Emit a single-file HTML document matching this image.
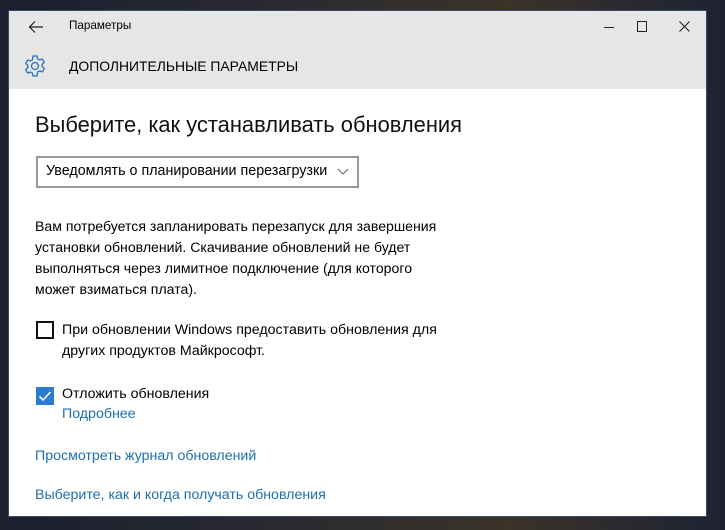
<!DOCTYPE html>
<html><head><meta charset="utf-8"><style>
body{margin:0;width:725px;height:530px;overflow:hidden;background:linear-gradient(90deg,#1b1f2e,#2a2a30 40%,#3a3328 70%,#1d2233);font-family:"Liberation Sans","DejaVu Sans",sans-serif;position:relative}
.win{position:absolute;left:8px;top:10px;width:699px;height:507px;background:#fff;border:1px solid #3b4a66;box-sizing:border-box}
.hdr{position:absolute;left:0;top:0;width:100%;height:78px;background:#e6e6e6}
.t{position:absolute;white-space:nowrap;color:#000}
.lk{color:#1f6fae}
</style></head><body>
<div class="win">
<div class="hdr">
<svg style="position:absolute;left:19px;top:9px" width="16" height="14" viewBox="0 0 16 14"><path d="M15 7H2M7 1.5L1.5 7 7 12.5" stroke="#222" stroke-width="1.2" fill="none"/></svg>
<div class="t" style="left:60px;top:8px;font-size:11.7px">Параметры</div>
<div style="position:absolute;left:595px;top:16px;width:10px;height:1px;background:#222"></div>
<div style="position:absolute;left:628px;top:10px;width:8px;height:9px;border:1px solid #222"></div>
<svg style="position:absolute;left:670px;top:10px" width="11" height="11"><path d="M0.5 0.5L10.5 10.5M10.5 0.5L0.5 10.5" stroke="#222" stroke-width="1.1"/></svg>
<svg style="position:absolute;left:14px;top:43px" width="24" height="24" viewBox="0 0 24 24"><g fill="none" stroke="#2b73b8" stroke-width="1.3"><path d="M10 2h4l.6 2.8 2 1.1 2.7-.9 2 3.4-2.1 1.9v2.3l2.1 1.9-2 3.4-2.7-.9-2 1.1L14 22h-4l-.6-2.8-2-1.1-2.7.9-2-3.4 2.1-1.9v-2.3L2.7 9.4l2-3.4 2.7.9 2-1.1z"/><circle cx="12" cy="12" r="3.5"/></g></svg>
<div class="t" style="left:60px;top:47px;font-size:13.9px">ДОПОЛНИТЕЛЬНЫЕ ПАРАМЕТРЫ</div>
</div>
<div class="t" style="left:26px;top:101px;font-size:21.9px;color:#111">Выберите, как устанавливать обновления</div>
<div style="position:absolute;left:27px;top:145px;width:323px;height:32px;border:2px solid #999;box-sizing:border-box"></div>
<div class="t" style="left:37px;top:152px;font-size:14.3px">Уведомлять о планировании перезагрузки</div>
<svg style="position:absolute;left:328px;top:157px" width="12" height="8"><path d="M1 1l5 5 5-5" stroke="#666" fill="none"/></svg>
<div class="t" style="left:26px;top:205px;font-size:14.1px;line-height:21px">Вам потребуется запланировать перезапуск для завершения<br>установки обновлений. Скачивание обновлений не будет<br>выполняться через лимитное подключение (для которого<br>может взиматься плата).</div>
<div style="position:absolute;left:27px;top:310px;width:18px;height:18px;border:2px solid #111;box-sizing:border-box"></div>
<div class="t" style="left:53px;top:309px;font-size:14.2px;line-height:21px">При обновлении Windows предоставить обновления для<br>других продуктов Майкрософт.</div>
<div style="position:absolute;left:27px;top:376px;width:18px;height:18px;background:#2b7bd0"></div>
<svg style="position:absolute;left:27px;top:376px" width="18" height="18"><path d="M3.5 9.5l3.5 3.5 7.5-8" stroke="#fff" stroke-width="1.6" fill="none"/></svg>
<div class="t" style="left:53px;top:375px;font-size:14.2px">Отложить обновления</div>
<div class="t lk" style="left:53px;top:395px;font-size:14.2px">Подробнее</div>
<div class="t lk" style="left:26px;top:437px;font-size:14.2px">Просмотреть журнал обновлений</div>
<div class="t lk" style="left:26px;top:476px;font-size:14.2px">Выберите, как и когда получать обновления</div>
</div>
</body></html>
